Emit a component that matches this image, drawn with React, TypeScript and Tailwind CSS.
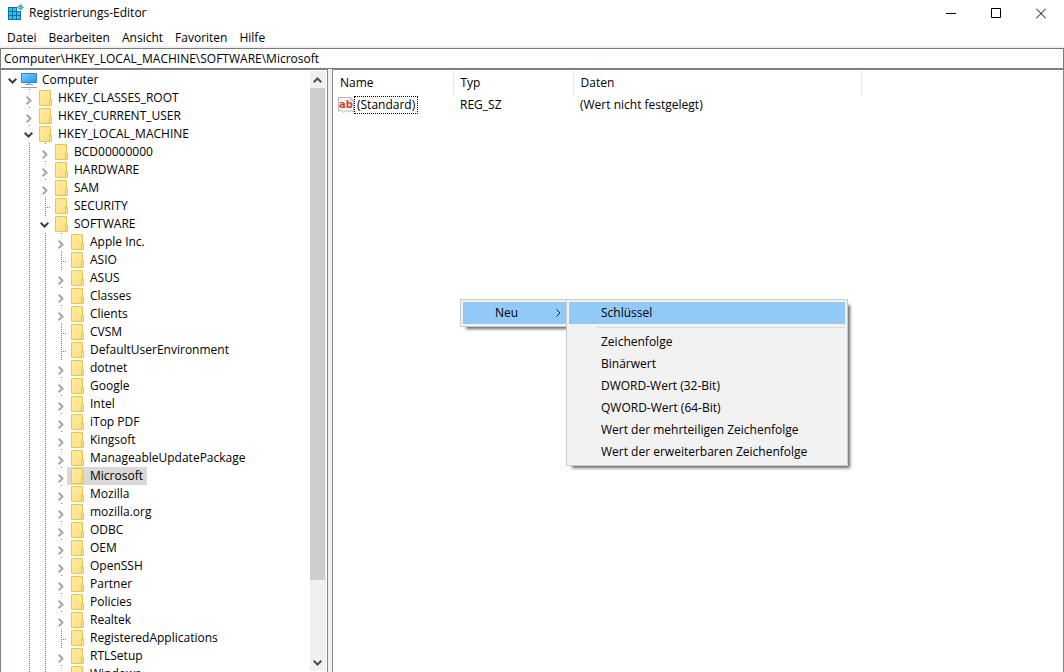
import { useState } from 'react';

type Node = { label: string; depth: number; state: 'open' | 'closed' | 'leaf' };

const n = (label: string, depth: number, state: Node['state'] = 'closed'): Node => ({ label, depth, state });

const nodes: Node[] = [
  n('Computer', 0, 'open'),
  n('HKEY_CLASSES_ROOT', 1),
  n('HKEY_CURRENT_USER', 1),
  n('HKEY_LOCAL_MACHINE', 1, 'open'),
  n('BCD00000000', 2),
  n('HARDWARE', 2),
  n('SAM', 2),
  n('SECURITY', 2, 'leaf'),
  n('SOFTWARE', 2, 'open'),
  n('Apple Inc.', 3),
  n('ASIO', 3, 'leaf'),
  n('ASUS', 3),
  n('Classes', 3),
  n('Clients', 3),
  n('CVSM', 3, 'leaf'),
  n('DefaultUserEnvironment', 3, 'leaf'),
  n('dotnet', 3),
  n('Google', 3),
  n('Intel', 3),
  n('iTop PDF', 3),
  n('Kingsoft', 3),
  n('ManageableUpdatePackage', 3),
  n('Microsoft', 3),
  n('Mozilla', 3),
  n('mozilla.org', 3),
  n('ODBC', 3),
  n('OEM', 3),
  n('OpenSSH', 3),
  n('Partner', 3),
  n('Policies', 3),
  n('Realtek', 3),
  n('RegisteredApplications', 3, 'leaf'),
  n('RTLSetup', 3),
  n('Windows', 3),
];

const menus = ['Datei', 'Bearbeiten', 'Ansicht', 'Favoriten', 'Hilfe'];

const newItems = [
  'Zeichenfolge',
  'Binärwert',
  'DWORD-Wert (32-Bit)',
  'QWORD-Wert (64-Bit)',
  'Wert der mehrteiligen Zeichenfolge',
  'Wert der erweiterbaren Zeichenfolge',
];

function RegeditIcon() {
  return (
    <svg width="16" height="16" viewBox="0 0 16 16" className="mb-0.5" aria-hidden="true">
      <path d="M0 3h9v4h4v9H0z" fill="#0b6fa6" />
      <path d="M1 4h3v3H1zM5 4h3v3H5zM1 8h3v3H1zM5 8h3v3H5zM9 8h3v3H9zM1 12h3v3H1zM5 12h3v3H5zM9 12h3v3H9z" fill="#35bdf0" />
      <path d="M12.500 .7 15.200 3.400 12.500 6.100 9.800 3.400z" fill="#5cc4ea" stroke="#2a86b4" strokeWidth="1" />
    </svg>
  );
}

function FolderIcon() {
  return (
    <svg width="13" height="16" viewBox="0 0 13 16" aria-hidden="true">
      <defs>
        <linearGradient id="folder" x1="0" y1="0" x2="1" y2="1">
          <stop offset="0" stopColor="#ffeba6" />
          <stop offset="1" stopColor="#ffdf7c" />
        </linearGradient>
      </defs>
      <path d="M.5.500h11v9h1v6H.5z" fill="url(#folder)" stroke="#eac64c" />
      <path d="M10.500 15V9.500h2V15" fill="#ffe48e" stroke="#eac64c" />
    </svg>
  );
}

function ComputerIcon() {
  return (
    <svg width="16" height="16" viewBox="0 0 16 16" aria-hidden="true">
      <defs>
        <linearGradient id="screen" x1="0" y1="0" x2="1" y2="1">
          <stop offset="0" stopColor="#7fd0ff" />
          <stop offset="1" stopColor="#1e97ee" />
        </linearGradient>
      </defs>
      <path d="M.5 1.500h15v9H.5z" fill="url(#screen)" stroke="#2b86c4" />
      <path d="M7 11h2v1H7z" fill="#8ea2b3" />
      <path d="M4 12h8v1H4z" fill="#8ea2b3" />
      <path d="M0 15.500h16" stroke="#8ea2b3" />
    </svg>
  );
}

function StringIcon() {
  return (
    <svg width="16" height="16" viewBox="0 0 16 16" className="overflow-visible" aria-hidden="true">
      <path d="M.5.500h12l3 3v11.500l-2-1.500-2 1.500-3-1.500-3 2-2-2-3 .500z" fill="#fafafa" stroke="#b5b5b5" />
      <path d="M12.500.500v3h3" fill="none" stroke="#b5b5b5" />
      <text x="1" y="11" fontSize="10" fontWeight="700" fontFamily="DejaVu Sans, sans-serif" fill="#d4452a">ab</text>
    </svg>
  );
}

function Chevron({ open }: { open: boolean }) {
  return open ? (
    <svg width="9" height="6" viewBox="0 0 9 6" className="mt-1.5 ml-[5px]" fill="none" stroke="#404040" strokeWidth="2" aria-hidden="true">
      <path d="M.7.700 4.500 4.500 8.300.700" />
    </svg>
  ) : (
    <svg width="6" height="9" viewBox="0 0 6 9" className="mt-1.5 ml-[7px]" fill="none" stroke="#a6a6a6" strokeWidth="2" aria-hidden="true">
      <path d="M.7.700 4.500 4.500.7 8.300" />
    </svg>
  );
}

const dots = 'ml-2.5 w-px bg-[repeating-linear-gradient(to_bottom,#808080_0_1px,transparent_1px_2px)]';

function TreeRow({ node, selected, onSelect }: { node: Node; selected: boolean; onSelect: () => void }) {
  return (
    <li role="treeitem" aria-selected={selected} className="flex h-[18px] items-stretch">
      {Array.from({ length: node.depth }, (_, i) => (
        <span key={i} className="flex w-4 shrink-0">
          {i > 0 && <span className={dots} />}
        </span>
      ))}
      {node.state === 'leaf' ? (
        <span className="flex w-4 shrink-0">
          <span className={dots} />
          <span className="mt-2.5 ml-px h-px flex-1 bg-[repeating-linear-gradient(to_right,#808080_0_1px,transparent_1px_2px)]" />
        </span>
      ) : (
        <span className="flex w-4 shrink-0 flex-col items-start">
          <span className={`ml-2.5 h-px w-px shrink-0 ${node.depth > 0 ? 'bg-[#808080]' : ''}`} />
          <Chevron open={node.state === 'open'} />
        </span>
      )}
      <button onClick={onSelect} className={`flex items-center pr-1 pl-0.5 whitespace-nowrap ${selected ? 'bg-[#d9d9d9]' : ''}`}>
        <span className={`flex w-[21px] ${node.depth > 0 ? 'pl-0.5' : ''}`}>
          {node.depth === 0 ? <ComputerIcon /> : <FolderIcon />}
        </span>
        {node.label}
      </button>
    </li>
  );
}

export default function App() {
  const [selected, setSelected] = useState('Microsoft');
  return (
    <div className="flex h-screen flex-col overflow-hidden bg-white font-['Open_Sans','Noto_Sans',sans-serif] text-[12px] leading-[18px] text-black">
      <header className="flex h-[26px] shrink-0 items-center pl-2">
        <RegeditIcon />
        <h1 className="flex-1 pl-[5px]">Registrierungs-Editor</h1>
        <button aria-label="Minimieren" className="flex h-full w-[46px] items-center justify-center">
          <svg width="10" height="11" stroke="#000"><path d="M0 5.500h10" /></svg>
        </button>
        <button aria-label="Maximieren" className="flex h-full w-11 items-center justify-center">
          <svg width="10" height="11" stroke="#000" fill="none"><path d="M.5.500h9v9h-9z" /></svg>
        </button>
        <button aria-label="Schließen" className="flex h-full w-[46px] items-center justify-center">
          <svg width="10" height="11" stroke="#000"><path d="M0 .500l10 10M10 .500l-10 10" /></svg>
        </button>
      </header>
      <nav className="flex h-5 shrink-0 items-center gap-3 pl-[7px]">
        {menus.map((m) => (
          <button key={m} className="pt-1">{m}</button>
        ))}
      </nav>
      <div className="shrink-0 bg-[#f0f0f0] pt-0.5">
        <input
          aria-label="Adresse"
          defaultValue="Computer\HKEY_LOCAL_MACHINE\SOFTWARE\Microsoft"
          className="block h-[21px] w-full border border-[#7a7a7a] bg-white px-[3px] outline-none"
        />
      </div>
      <main className="flex min-h-0 flex-1 gap-1 bg-[#f0f0f0]">
        <section className="flex w-[328px] shrink-0 overflow-hidden border border-b-0 border-[#828790] bg-white pr-px">
          <ul role="tree" aria-label="Registrierung" className="min-w-0 flex-1 overflow-hidden pt-px pl-0.5">
            {nodes.map((node) => (
              <TreeRow key={node.label} node={node} selected={node.label === selected} onSelect={() => setSelected(node.label)} />
            ))}
          </ul>
          <div className="my-px flex w-4 flex-col bg-[#f0f0f0] pr-px">
            <button aria-label="Nach oben" className="flex h-[17px] w-full items-center justify-center">
              <svg width="9" height="6" fill="none" stroke="#505050" strokeWidth="2"><path d="M.7 5.300 4.500 1.500 8.300 5.300" /></svg>
            </button>
            <div className="min-h-0 flex-1">
              <div className="h-[87%] bg-[#cdcdcd]" />
            </div>
            <button aria-label="Nach unten" className="flex h-[17px] w-full items-center justify-center">
              <svg width="9" height="6" fill="none" stroke="#505050" strokeWidth="2"><path d="M.7.700 4.500 4.500 8.300.700" /></svg>
            </button>
          </div>
        </section>
        <section className="min-w-0 flex-1 border border-b-0 border-[#828790] bg-white">
          <table className="mt-px table-fixed border-collapse text-left">
            <thead>
              <tr className="h-6">
                <th className="w-[120px] border-r border-[#e5e5e5] pl-[7px] font-normal">Name</th>
                <th className="w-[120px] border-r border-[#e5e5e5] pl-[7px] font-normal">Typ</th>
                <th className="w-[288px] border-r border-[#e5e5e5] pl-[7px] font-normal">Daten</th>
              </tr>
            </thead>
            <tbody>
              <tr className="h-5">
                <td className="pl-[5px]">
                  <span className="flex items-center">
                    <StringIcon />
                    <span className="border border-dotted border-black px-0.5 leading-4">(Standard)</span>
                  </span>
                </td>
                <td className="pl-[7px]">REG_SZ</td>
                <td className="pl-[7px]">(Wert nicht festgelegt)</td>
              </tr>
            </tbody>
          </table>
        </section>
      </main>

      <div role="menu" className="absolute top-[299px] left-[460px] flex w-[107px] border border-r-0 border-[#ccc] bg-[#f2f2f2] py-0.5 pl-0.5 shadow-[4px_4px_3px_-2px_rgba(0,0,0,0.6)]">
        <button role="menuitem" className="flex h-[22px] flex-1 items-center justify-between bg-[#91c9f7] pr-1.5 pl-8">
          Neu
          <svg width="5" height="8" fill="none" stroke="#222"><path d="M.5.500 4 4 .5 7.500" /></svg>
        </button>
      </div>
      <div role="menu" className="absolute top-[299px] left-[566px] flex w-[282px] flex-col border border-[#ccc] bg-[#f2f2f2] p-0.5 shadow-[4px_4px_3px_-2px_rgba(0,0,0,0.6)]">
        <button role="menuitem" className="h-[22px] bg-[#91c9f7] pl-8 text-left">Schlüssel</button>
        <hr className="mt-[3px] mb-[3px] ml-7 border-[#d7d7d7]" />
        {newItems.map((item) => (
          <button key={item} role="menuitem" className="h-[22px] pl-8 text-left">{item}</button>
        ))}
      </div>
    </div>
  );
}
